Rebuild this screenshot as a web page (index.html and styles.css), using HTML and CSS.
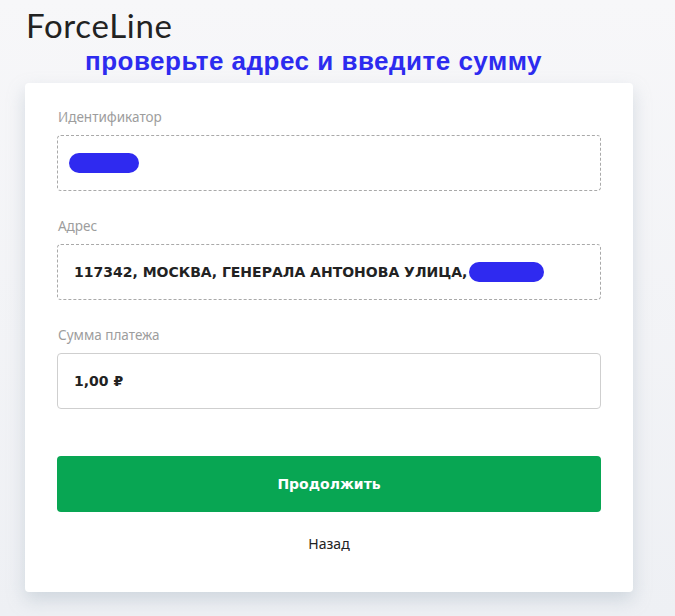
FILE: index.html
```html
<!DOCTYPE html>
<html lang="ru">
<head>
  <meta charset="UTF-8">
  <title>ForceLine – Оплата</title>
  <meta name="viewport" content="width=device-width, initial-scale=1.0">
  <link rel="stylesheet" href="styles.css">
</head>
<body>
  <header class="top">
    <div class="logo">ForceLine</div>
    <div class="hint">проверьте адрес и введите сумму</div>
  </header>

  <div class="card">
    <form class="pay-form">
      <div class="field">
        <label>Идентификатор</label>
        <div class="box box-dashed"><span class="mask mask-id"></span></div>
      </div>
      <div class="field">
        <label>Адрес</label>
        <div class="box box-dashed">
          <span class="value">117342, МОСКВА, ГЕНЕРАЛА АНТОНОВА УЛИЦА,</span><span class="mask mask-addr"></span>
        </div>
      </div>
      <div class="field">
        <label for="sum">Сумма платежа</label>
        <div class="box box-solid"><span class="value">1,00 ₽</span></div>
      </div>
      <button type="button" class="btn-next">Продолжить</button>
      <a href="#" class="back">Назад</a>
    </form>
  </div>
</body>
</html>
```

FILE: styles.css
```css
body {
  margin: 0;
  font-family: "Noto Sans", "Open Sans", sans-serif;
  background: linear-gradient(180deg, #f7f7f9 0%, #eef0f4 100%);
  color: #222;
  min-height: 616px;
}
.top {
  padding: 6px 0 0 26px;
  height: 77px;
  box-sizing: border-box;
}
.logo {
  font-family: Lato, "Noto Sans", sans-serif;
  font-size: 33px;
  line-height: 38px;
  letter-spacing: 0.7px;
  color: #222;
}
.hint {
  margin: 3px 0 0 59px;
  font-family: "Liberation Sans", Arial, sans-serif;
  font-weight: bold;
  font-size: 26px;
  line-height: 28px;
  letter-spacing: 0.5px;
  color: #2d2bef;
}
.card {
  margin: 6px 0 0 25px;
  width: 608px;
  background: #fff;
  border-radius: 4px;
  box-shadow: 0 8px 18px rgba(150, 165, 180, 0.35);
  padding: 25px 32px 38px;
  box-sizing: border-box;
}
.pay-form {
  display: flex;
  flex-direction: column;
}
.field {
  margin-bottom: 26px;
}
.field label {
  display: block;
  font-size: 13.5px;
  line-height: 18px;
  color: #9d9d9d;
  margin: 0 0 9px 1px;
}
.box {
  height: 56px;
  box-sizing: border-box;
  border-radius: 4px;
  display: flex;
  align-items: center;
  padding: 0 16px;
}
.box-dashed {
  border: 1px dashed #a9a9a9;
}
.box-solid {
  border: 1px solid #cfcfcf;
}
.value {
  font-family: "DejaVu Sans", Verdana, sans-serif;
  font-size: 14px;
  font-weight: bold;
  color: #222;
  white-space: nowrap;
}
.mask {
  display: inline-block;
  height: 20px;
  border-radius: 10px;
  background: #2f2af0;
}
.mask-id {
  width: 70px;
  margin-left: -5px;
}
.mask-addr {
  width: 75px;
  margin-left: 2px;
}
.btn-next {
  margin-top: 21px;
  height: 56px;
  border: none;
  border-radius: 4px;
  background: #08a653;
  color: #fff;
  font-family: "DejaVu Sans", Verdana, sans-serif;
  font-size: 14px;
  font-weight: bold;
  cursor: pointer;
}
.back {
  align-self: center;
  margin-top: 22px;
  font-size: 14px;
  line-height: 20px;
  color: #222;
  text-decoration: none;
}
```
